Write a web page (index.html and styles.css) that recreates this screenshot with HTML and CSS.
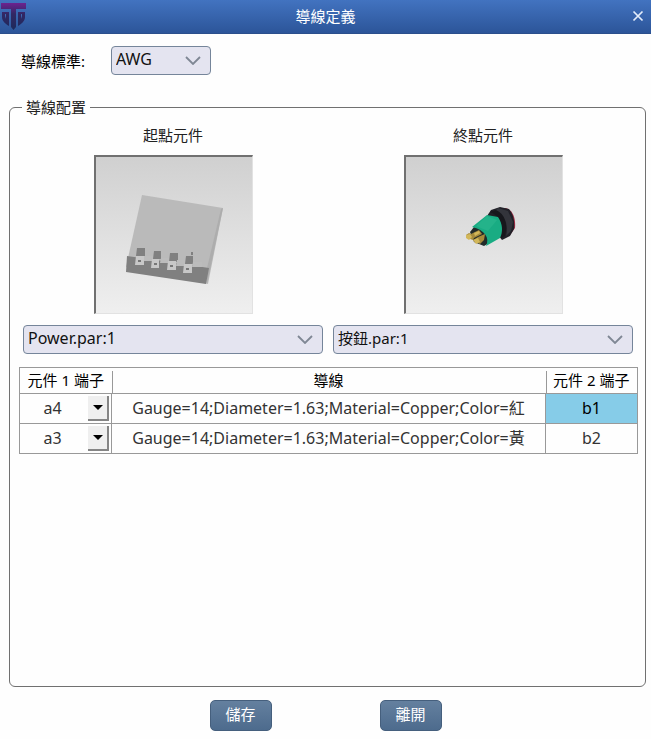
FILE: index.html
```
<!DOCTYPE html>
<html lang="zh-Hant">
<head>
<meta charset="utf-8">
<meta name="viewport" content="width=device-width, initial-scale=1">
<title>導線定義</title>
<link rel="stylesheet" href="styles.css">
</head>
<body>
<header class="titlebar">
  <svg class="logo" viewBox="0 0 27 30" aria-hidden="true">
    <defs>
      <linearGradient id="logo-fill" x1="0" y1="0" x2="0" y2="1">
        <stop offset="0" stop-color="#6d2390"/>
        <stop offset="0.4" stop-color="#322764"/>
        <stop offset="1" stop-color="#1c2a5c"/>
      </linearGradient>
    </defs>
    <path fill="url(#logo-fill)" d="M1 2H26V8H16V26L13.500 29L11 26V8H1ZM2 11H9V25C4 22 2 19 2 16ZM18 11H25V16C25 19 23 22 18 25Z"/>
    <path fill="#3b69b3" d="M5 13H6V18L5 15ZM21 13H22V15L21 18Z"/>
  </svg>
  <h1 class="title">導線定義</h1>
  <button class="close" type="button" aria-label="關閉">
    <svg viewBox="0 0 12 12" aria-hidden="true"><path d="M1.5 1.5L10.5 10.5M10.5 1.5L1.5 10.5"/></svg>
  </button>
</header>
<main class="content">
  <div class="standard">
    <label class="standard-label" for="standard">導線標準:</label>
    <div class="combo combo-small">
      <select class="latin" id="standard"><option>AWG</option></select>
      <svg class="chevron" viewBox="0 0 16 9" aria-hidden="true"><path d="M1 1L8 8L15 1"/></svg>
    </div>
  </div>
  <fieldset class="config">
    <legend>導線配置</legend>
    <div class="parts">
      <section class="part">
        <label class="part-label" for="start">起點元件</label>
        <div class="preview">
          <svg viewBox="0 0 156 156" aria-hidden="true">
            <path fill="#bababa" d="M46 38L127 51L112 127L30 110Z"/>
            <path fill="#adadad" d="M127 51L111 127L111 111L125 52Z"/>
            <path fill="#808080" d="M31 99L60 103L113 111L110 127L30 115Z"/>
            <path fill="#808080" d="M41 91H49V99H40ZM58 94H65V102H57ZM74 96H82V105H73ZM90 99H97V107H89ZM95 95H97V98H95Z"/>
            <path fill="#bcbcbc" d="M48 99H57V104H47ZM65 101H73V106H64ZM81 103H89V109H80ZM97 105H106V110H96Z"/>
            <path fill="#c8c8c8" d="M40 99H48V108H39ZM56 102H63V111H55ZM72 104H80V113H71ZM88 107H96V116H87Z"/>
            <path fill="#777" d="M42 103H45V105H42ZM58 106H61V108H58ZM74 108H77V110H74ZM90 111H93V113H90Z"/>
          </svg>
        </div>
        <div class="combo">
          <select class="latin" id="start"><option>Power.par:1</option></select>
          <svg class="chevron" viewBox="0 0 16 9" aria-hidden="true"><path d="M1 1L8 8L15 1"/></svg>
        </div>
      </section>
      <section class="part">
        <label class="part-label" for="end">終點元件</label>
        <div class="preview">
          <svg viewBox="0 0 156 156" aria-hidden="true">
            <path fill="#a42b45" d="M99 51C106 52 110 60 109 71L104 78L96 55Z"/>
            <path fill="#202027" d="M81 59L85 53L94 50L103 52C107 57 109 63 108 72L104 79L96 83L92 78Z"/>
            <path fill="#33343b" d="M92 51L102 54L107 65L105 74L100 79C103 68 99 58 89 54Z"/>
            <path fill="#17171c" d="M90 53C99 57 102 67 99 79L95 81C98 68 93 58 84 55Z"/>
            <path fill="#222b2a" d="M64 75L68 70L80 72L84 78L83 86L78 89L68 85Z"/>
            <path fill="#19ac83" d="M66 70L81 58L92 60C97 67 97 75 94 81L80 89C84 81 79 73 66 70Z"/>
            <path fill="#35bd96" d="M70 69L81 59L91 63L82 74Z" opacity="0.4"/>
            <path fill="#a58a3b" d="M65 77L73 73L76 77L68 81L67 83L61 81L60 78L63 76ZM72 80L79 77L78 83L74 87L67 83Z"/>
            <path fill="#d2b75a" d="M60 78L64 77L66 80L63 83L60 81ZM68 76L73 74L74 76L69 79ZM67 83L72 81L74 85L70 87Z"/>
          </svg>
        </div>
        <div class="combo">
          <select id="end"><option>按鈕.par:1</option></select>
          <svg class="chevron" viewBox="0 0 16 9" aria-hidden="true"><path d="M1 1L8 8L15 1"/></svg>
        </div>
      </section>
    </div>
    <table class="wires">
      <thead>
        <tr><th class="terminal" scope="col">元件 1 端子</th><th scope="col">導線</th><th class="terminal" scope="col">元件 2 端子</th></tr>
      </thead>
      <tbody>
        <tr>
          <td><div class="cell-combo"><select aria-label="元件 1 端子"><option>a4</option></select><span class="arrow"></span></div></td>
          <td>Gauge=14;Diameter=1.63;Material=Copper;Color=紅</td>
          <td class="selected">b1</td>
        </tr>
        <tr>
          <td><div class="cell-combo"><select aria-label="元件 1 端子"><option>a3</option></select><span class="arrow"></span></div></td>
          <td>Gauge=14;Diameter=1.63;Material=Copper;Color=黃</td>
          <td>b2</td>
        </tr>
      </tbody>
    </table>
  </fieldset>
</main>
<footer class="actions">
  <button type="button">儲存</button>
  <button type="button">離開</button>
</footer>
</body>
</html>
```
FILE: styles.css
```
* {
  box-sizing: border-box;
}

body {
  display: flex;
  flex-direction: column;
  min-height: 100vh;
  margin: 0;
  background: #fefefe;
  color: #222;
  font: 15px/20px "Noto Sans", "Noto Sans CJK TC", sans-serif;
}

button,
select {
  font: inherit;
}

.titlebar {
  display: grid;
  grid-template-columns: 27px 1fr 27px;
  align-items: center;
  height: 34px;
  padding-bottom: 2px;
  background: linear-gradient(#4273c0, #2c5599);
  border-bottom: 1px solid #2b4f8c;
  color: #fff;
}

.logo {
  width: 27px;
  height: 30px;
}

.title {
  margin: 0;
  font-size: 15px;
  font-weight: 400;
  text-align: center;
}

.close {
  display: grid;
  place-items: center;
  height: 27px;
  padding: 0;
  border: 0;
  background: none;
}

.close svg {
  width: 12px;
  height: 12px;
  fill: none;
  stroke: #e4edfb;
  stroke-width: 1.7;
}

.content {
  display: flex;
  flex: 1;
  flex-direction: column;
}

.standard {
  display: flex;
  align-items: center;
  gap: 26px;
  padding: 12px 21px 22px;
  color: #000;
}

.combo {
  position: relative;
  width: 100%;
}

.combo-small {
  width: 100px;
}

.combo select {
  display: block;
  width: 100%;
  height: 29px;
  padding: 0 30px 3px 4px;
  border: 1px solid #75859a;
  border-radius: 4px;
  background: #e4e4f0;
  color: #111;
  appearance: none;
}

.combo .latin {
  font-size: 16px;
}

.chevron {
  position: absolute;
  top: 10px;
  right: 10px;
  width: 16px;
  height: 9px;
  fill: none;
  stroke: #7f8794;
  stroke-width: 1.8;
  pointer-events: none;
}

.config {
  flex: 1;
  min-width: 0;
  margin: 0 5px 0 9px;
  padding: 8px 7px 16px 9px;
  border: 1px solid #707070;
  border-radius: 6px;
}

.config legend {
  margin-left: 3px;
  padding: 0 4px;
}

.parts {
  display: grid;
  grid-template-columns: 1fr 1fr;
  gap: 10px;
  padding: 0 5px 0 4px;
}

.part {
  display: flex;
  flex-direction: column;
  align-items: center;
}

.preview {
  width: 159px;
  height: 159px;
  margin: 10px 0 11px;
  border: solid #e2e2e2;
  border-width: 2px 1px 1px 2px;
  border-top-color: #707070;
  border-left-color: #707070;
  background: linear-gradient(#d0d0d0, #efefef);
}

.preview svg {
  display: block;
  width: 100%;
  height: 100%;
}

.wires {
  width: 100%;
  margin-top: 13px;
  border: 1px solid #999;
  border-collapse: collapse;
  table-layout: fixed;
  text-align: center;
}

.wires th {
  height: 26px;
  padding: 0 0 2px;
  color: #000;
  font-weight: 400;
}

.wires th + th {
  background: linear-gradient(#999, #999) left bottom / 1px 22px no-repeat;
}

.wires .terminal {
  width: 92px;
}

.wires td {
  height: 30px;
  padding: 0 0 2px;
  border: 1px solid #999;
  color: #333;
  font-size: 16px;
}

.wires .selected {
  background: #86cce8;
  color: #000;
}

.cell-combo {
  position: relative;
}

.cell-combo select {
  display: block;
  width: 100%;
  height: 24px;
  padding: 0 26px 0 0;
  border: 0;
  background: none;
  color: inherit;
  text-align: center;
  text-align-last: center;
  appearance: none;
}

.arrow {
  position: absolute;
  top: 0;
  right: 2px;
  display: grid;
  place-items: center;
  width: 21px;
  height: 25px;
  border: solid #858585;
  border-width: 0 2px 2px 0;
  background: #efefef;
  pointer-events: none;
}

.arrow::before {
  content: "";
  border: solid transparent;
  border-width: 5px 5px 0;
  border-top-color: #000;
}

.actions {
  display: flex;
  justify-content: center;
  gap: 108px;
  padding: 13px 0 8px;
}

.actions button {
  width: 62px;
  height: 31px;
  padding: 0 0 3px;
  border: 1px solid #455f7d;
  border-radius: 5px;
  background: linear-gradient(#64809f, #4d6b8d);
  color: #fff;
}
```
